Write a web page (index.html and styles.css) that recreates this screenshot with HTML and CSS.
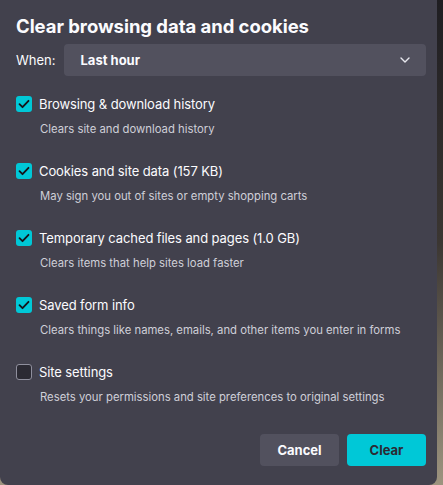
FILE: index.html
```html
<!DOCTYPE html>
<html>
<head>
<meta charset="utf-8">
<link rel="stylesheet" href="styles.css">
</head>
<body>
<div class="dialog">
  <h1 class="title">Clear browsing data and cookies</h1>
  <div class="when-row">
    <span class="when-label">When:</span>
    <div class="select">
      <span class="select-value">Last hour</span>
      <svg class="chevron" width="10" height="6" viewBox="0 0 10 6"><path d="M1 1 L5 5 L9 1" fill="none" stroke="#e8e8ee" stroke-width="1.4" stroke-linecap="round" stroke-linejoin="round"/></svg>
    </div>
  </div>
  <div class="items">
    <div class="item">
      <div class="item-head"><span class="box checked"><svg width="12" height="10" viewBox="0 0 12 10"><path d="M1.5 5.2 L4.5 8.2 L10.5 1.8" fill="none" stroke="#15141a" stroke-width="1.8" stroke-linecap="round" stroke-linejoin="round"/></svg></span><span class="label">Browsing &amp; download history</span></div>
      <div class="desc">Clears site and download history</div>
    </div>
    <div class="item">
      <div class="item-head"><span class="box checked"><svg width="12" height="10" viewBox="0 0 12 10"><path d="M1.5 5.2 L4.5 8.2 L10.5 1.8" fill="none" stroke="#15141a" stroke-width="1.8" stroke-linecap="round" stroke-linejoin="round"/></svg></span><span class="label">Cookies and site data (157 KB)</span></div>
      <div class="desc">May sign you out of sites or empty shopping carts</div>
    </div>
    <div class="item">
      <div class="item-head"><span class="box checked"><svg width="12" height="10" viewBox="0 0 12 10"><path d="M1.5 5.2 L4.5 8.2 L10.5 1.8" fill="none" stroke="#15141a" stroke-width="1.8" stroke-linecap="round" stroke-linejoin="round"/></svg></span><span class="label">Temporary cached files and pages (1.0 GB)</span></div>
      <div class="desc">Clears items that help sites load faster</div>
    </div>
    <div class="item">
      <div class="item-head"><span class="box checked"><svg width="12" height="10" viewBox="0 0 12 10"><path d="M1.5 5.2 L4.5 8.2 L10.5 1.8" fill="none" stroke="#15141a" stroke-width="1.8" stroke-linecap="round" stroke-linejoin="round"/></svg></span><span class="label">Saved form info</span></div>
      <div class="desc">Clears things like names, emails, and other items you enter in forms</div>
    </div>
    <div class="item">
      <div class="item-head"><span class="box"></span><span class="label">Site settings</span></div>
      <div class="desc">Resets your permissions and site preferences to original settings</div>
    </div>
  </div>
  <div class="actions">
    <button class="btn btn-secondary">Cancel</button>
    <button class="btn btn-primary">Clear</button>
  </div>
</div>
</body>
</html>
```
FILE: styles.css
```css
html, body {
  margin: 0;
  padding: 0;
}
body {
  width: 443px;
  height: 485px;
  overflow: hidden;
  background: linear-gradient(to bottom, #1f1e22 0%, #3b3632 50%, #9d947f 100%);
  font-family: Inter, "Noto Sans", sans-serif;
  color: #fbfbfe;
}
.dialog {
  box-sizing: border-box;
  width: 437px;
  height: 485px;
  background: #42414d;
  border-radius: 0 0 8px 8px;
  padding: 14px 11px 0 16px;
  display: flex;
  flex-direction: column;
}
.title {
  margin: 0;
  font-size: 18.5px;
  line-height: 24px;
  font-weight: 700;
  letter-spacing: -0.05px;
}
.when-row {
  margin-top: 6px;
  display: flex;
  align-items: center;
  gap: 8px;
}
.when-label {
  font-size: 13px;
}
.select {
  flex: 1;
  height: 32px;
  background: #52515e;
  border-radius: 4px;
  display: flex;
  align-items: center;
  justify-content: space-between;
  padding: 0 16px 0 17px;
}
.select-value {
  font-size: 13px;
  font-weight: 700;
}
.items {
  margin-top: 20px;
  display: flex;
  flex-direction: column;
  gap: 26px;
}
.item-head {
  display: flex;
  align-items: center;
  gap: 7px;
  height: 16px;
}
.box {
  box-sizing: border-box;
  width: 16px;
  height: 16px;
  border-radius: 3px;
  background: #2b2a33;
  border: 1px solid #8f8f9d;
  display: flex;
  align-items: center;
  justify-content: center;
}
.box.checked {
  background: #00c8d7;
  border: none;
}
.label {
  font-size: 13px;
  line-height: 16px;
  letter-spacing: -0.1px;
}
.desc {
  margin-top: 9px;
  padding-left: 24px;
  font-size: 11.3px;
  line-height: 16px;
  color: #cfcfd8;
}
.actions {
  margin-top: 29px;
  display: flex;
  justify-content: flex-end;
  gap: 8px;
}
.btn {
  width: 79px;
  height: 32px;
  border: none;
  border-radius: 4px;
  font-family: Inter, "Noto Sans", sans-serif;
  font-size: 13px;
  font-weight: 700;
  padding: 0;
}
.btn-secondary {
  background: #52515e;
  color: #fbfbfe;
}
.btn-primary {
  background: #00c8d7;
  color: #2b2a33;
}
```
